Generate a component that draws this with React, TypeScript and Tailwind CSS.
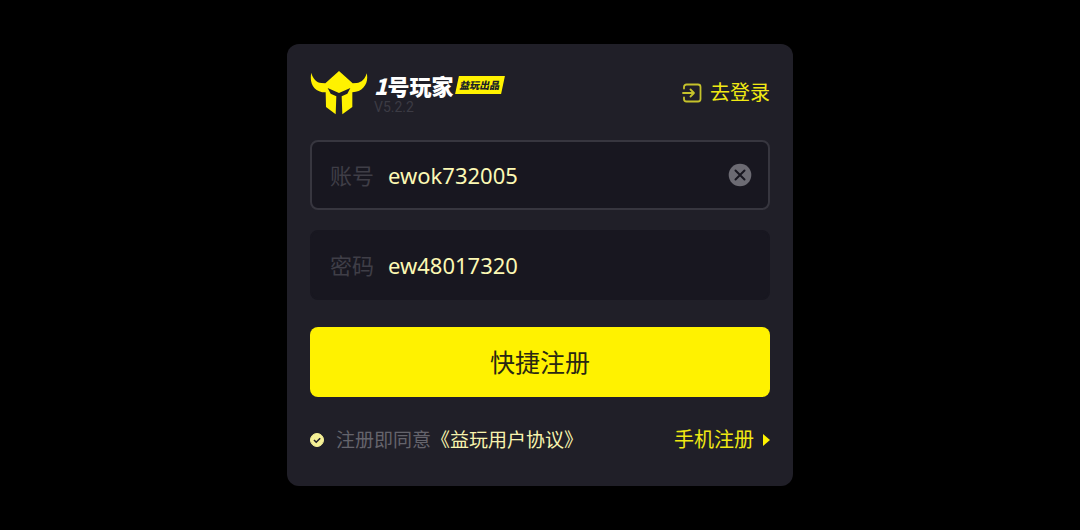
import { useState } from "react";

function HelmetLogo() {
  return (
    <svg viewBox="0 0 174 138" className="h-[46px] w-[58px] shrink-0 fill-[#fff200]" aria-hidden="true">
      <path d="M4 8C8 26 20 38 34 39L46 40L87 3L128 40L140 39C154 38 166 27 170 10C177 36 162 66 127 67L127 111L97 133L95 79L112 71L121 54L87 69L53 54L62 71L79 79L77 133L48 111L47 67C12 67-3 40 4 8Z" />
    </svg>
  );
}

function EnterIcon() {
  return (
    <svg
      viewBox="0 0 20 20"
      className="size-5 fill-none stroke-[#c5c22b] stroke-[1.8]"
      strokeLinecap="round"
      strokeLinejoin="round"
      aria-hidden="true"
    >
      <path d="M2 5.500V4a2.500 2.500 0 0 1 2.500-2.500H16a2.500 2.500 0 0 1 2.500 2.500v12a2.500 2.500 0 0 1-2.500 2.500H4.500A2.500 2.500 0 0 1 2 16v-1.500" />
      <path d="M1 10h11M8.500 6.500 12 10l-3.500 3.500" />
    </svg>
  );
}

function ClearIcon() {
  return (
    <svg viewBox="0 0 24 24" className="size-6" aria-hidden="true">
      <circle cx="12" cy="12" r="11.300" className="fill-[#6c6b73]" />
      <path d="M7.500 7.500l9 9M16.500 7.500l-9 9" className="fill-none stroke-[#181720] stroke-2" strokeLinecap="round" />
    </svg>
  );
}

export default function App() {
  const [account, setAccount] = useState("ewok732005");
  const [password, setPassword] = useState("ew48017320");
  const [agreed, setAgreed] = useState(true);

  return (
    <div className="flex min-h-screen items-center justify-center bg-black font-['Noto_Sans','Noto_Sans_CJK_SC',sans-serif]">
      <form
        className="w-full max-w-[506px] rounded-xl bg-[#201f28] px-[23px] pt-[25px] pb-8"
        onSubmit={(e) => e.preventDefault()}
      >
        <header className="flex h-12 items-center justify-between">
          <div className="flex items-center gap-1.5">
            <HelmetLogo />
            <div className="flex flex-col">
              <div className="flex items-center gap-1">
                <h1 className="font-['Noto_Sans_CJK_SC',sans-serif] text-[22px] leading-7 font-black text-white">
                  <span className="italic">1</span>号玩家
                </h1>
                <span className="flex h-[18px] -skew-x-12 items-center bg-[#fff200] px-[3px] font-['Noto_Sans_CJK_SC',sans-serif] text-[10px] leading-none font-black text-[#201f28]">
                  益玩出品
                </span>
              </div>
              <span className="font-['Roboto',sans-serif] text-sm leading-4 text-[#3c3b44]">V5.2.2</span>
            </div>
          </div>
          <a href="#login" className="flex items-center gap-2 text-xl leading-6 text-[#f0e913]">
            <EnterIcon />
            去登录
          </a>
        </header>

        <div className="mt-[23px] flex h-[70px] items-center gap-3.5 rounded-lg border-2 border-[#37363f] bg-[#181720] pr-4 pl-[18px]">
          <label htmlFor="account" className="text-[22px] leading-8 text-[#3f3e47]">
            账号
          </label>
          <input
            id="account"
            value={account}
            onChange={(e) => setAccount(e.target.value)}
            className="min-w-0 flex-1 bg-transparent text-[22px] leading-8 text-[#fcf9b4] outline-none"
          />
          <button type="button" aria-label="清除" onClick={() => setAccount("")}>
            <ClearIcon />
          </button>
        </div>

        <div className="mt-5 flex h-[70px] items-center gap-3.5 rounded-lg border-2 border-[#181720] bg-[#181720] pr-4 pl-[18px]">
          <label htmlFor="password" className="text-[22px] leading-8 text-[#3f3e47]">
            密码
          </label>
          <input
            id="password"
            value={password}
            onChange={(e) => setPassword(e.target.value)}
            className="min-w-0 flex-1 bg-transparent text-[22px] leading-8 text-[#fcf9b4] outline-none"
          />
        </div>

        <button
          type="submit"
          className="mt-[27px] flex h-[70px] w-full items-center justify-center rounded-lg bg-[#fff200] text-[25px] leading-8 text-[#2a2812]"
        >
          快捷注册
        </button>

        <footer className="mt-[29px] flex h-7 items-center justify-between">
          <div className="flex items-center text-[19px] leading-7">
            <span className="relative mr-3 flex size-3.5">
              <input
                id="agree"
                type="checkbox"
                checked={agreed}
                onChange={(e) => setAgreed(e.target.checked)}
                className="peer size-3.5 appearance-none rounded-full border border-[#f5f096] checked:bg-[#f5f096]"
              />
              <svg
                viewBox="0 0 14 14"
                className="pointer-events-none absolute inset-0 hidden size-3.5 fill-none stroke-[#201f28] stroke-[1.6] peer-checked:block"
                aria-hidden="true"
              >
                <path d="M4 7l2.200 2.200L10.200 5.200" />
              </svg>
            </span>
            <label htmlFor="agree" className="text-[#65646c]">
              注册即同意
            </label>
            <a href="#agreement" className="text-[#f8f4ae]">
              《益玩用户协议》
            </a>
          </div>
          <a href="#phone" className="flex items-center gap-2 text-xl leading-7 text-[#f0e913]">
            手机注册
            <svg viewBox="0 0 8 12" className="h-3 w-2 fill-[#fff200]" aria-hidden="true">
              <path d="M1 0 8 6 1 12Z" />
            </svg>
          </a>
        </footer>
      </form>
    </div>
  );
}
